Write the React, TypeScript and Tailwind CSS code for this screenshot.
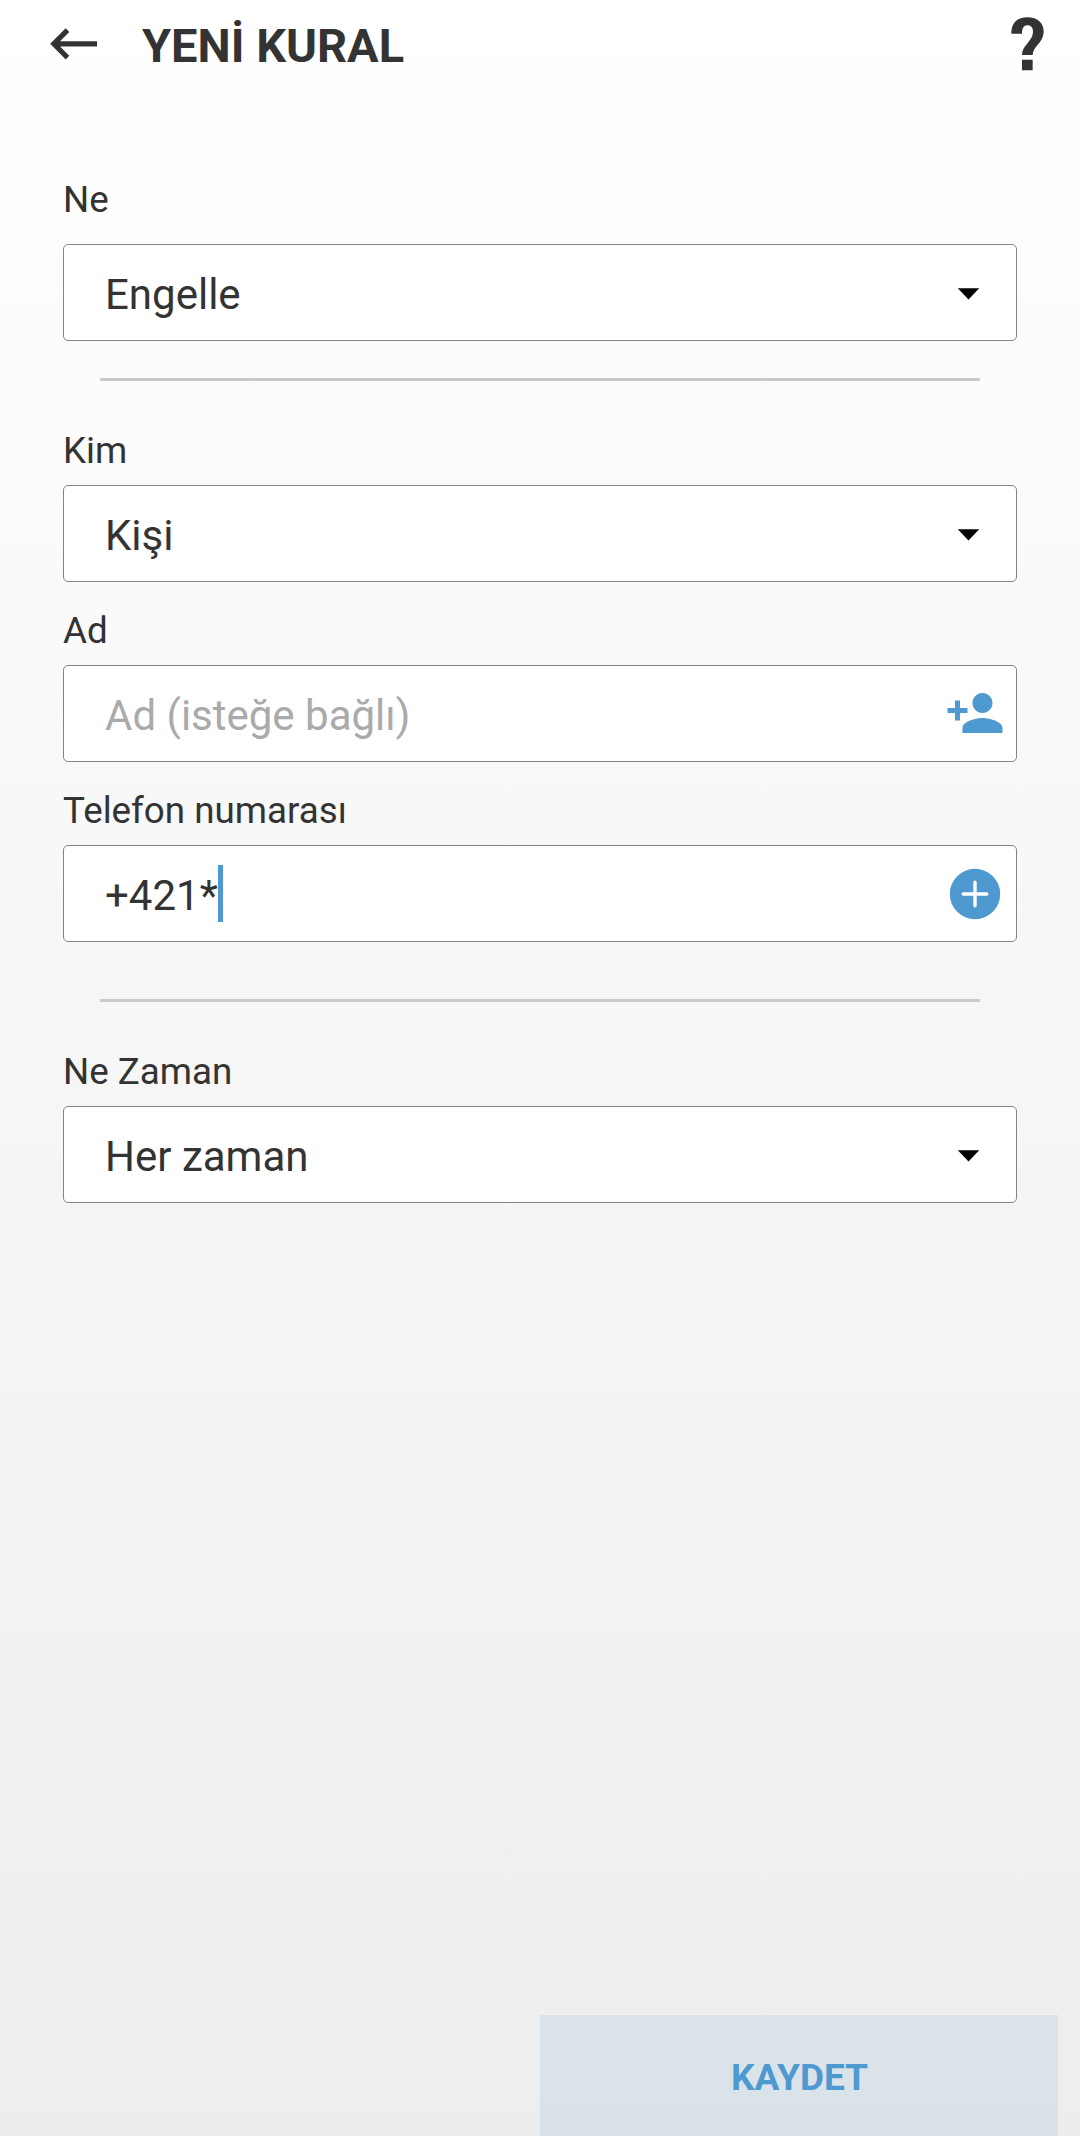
import type { ReactNode } from "react";
import { MdPersonAdd } from "react-icons/md";

function Label({ children }: { children: ReactNode }) {
  return <div className="h-11 text-[36.75px] leading-[46px]">{children}</div>;
}

function Field({ children, icon }: { children: ReactNode; icon: ReactNode }) {
  return (
    <div className="flex h-[97px] items-center justify-between rounded-[5px] border border-[#848484] bg-white pl-[41px] text-[42px] leading-[48px]">
      <div className="flex items-center pt-1">{children}</div>
      {icon}
    </div>
  );
}

function Caret() {
  return (
    <svg className="mt-[2px] mr-[36px] h-3 w-[23px]" viewBox="0 0 23 12">
      <path d="M0.8 0.2H22.2L11.5 11.6Z" fill="#000" />
    </svg>
  );
}

function Divider() {
  return <div className="mx-[37px] h-[3px] bg-[#cacaca]" />;
}

export default function App() {
  return (
    <div className="flex h-[2136px] w-[1080px] flex-col overflow-hidden bg-[linear-gradient(to_bottom,#ffffff_-17px,#ebebeb_2403px)] font-['Roboto',sans-serif] text-[#333333]">
      <header className="flex h-[92px] items-center pr-9 pl-[49px]">
        <svg className="mb-[5px] h-9 w-[50px]" viewBox="49 25.5 50 36" fill="#333333">
          <path d="M50.2 43.3L65.7 27.8L69.3 31.5L60 40.8H97V46H60L69.3 55.3L65.7 59Z" />
        </svg>
        <h1 className="ml-[43px] text-[47px] leading-[56px] font-bold">YENİ KURAL</h1>
        <svg className="mb-[5px] ml-auto h-[54px] w-[33px]" viewBox="154 50 99 162" fill="#333333">
          <path d="M155 100C155 68 172 51 203 51C234 51 252 68 252 94C252 127 219 138 219 164H187C187 134 220 122 220 94C220 82 214 75 203 75C192 75 187 84 187 100ZM187 178h32v32h-32z" />
        </svg>
      </header>

      <main className="flex flex-col px-[63px] pt-[85px]">
        <section className="flex flex-col gap-[23px]">
          <Label>Ne</Label>
          <Field icon={<Caret />}>Engelle</Field>
        </section>

        <div className="pt-[37px] pb-[47px]">
          <Divider />
        </div>

        <section className="flex flex-col gap-[26px]">
          <div className="flex flex-col gap-[13px]">
            <Label>Kim</Label>
            <Field icon={<Caret />}>Kişi</Field>
          </div>
          <div className="flex flex-col gap-[13px]">
            <Label>Ad</Label>
            <Field icon={<MdPersonAdd className="mr-[11px] mb-px size-[60px] text-[#4e99d0]" />}>
              <span className="text-[#aaaaaa]">Ad (isteğe bağlı)</span>
            </Field>
          </div>
          <div className="flex flex-col gap-[13px]">
            <Label>Telefon numarası</Label>
            <Field
              icon={
                <svg className="mr-[15px] size-[52px]" viewBox="0 0 52 52">
                  <circle cx="26" cy="26" r="25.2" fill="#4e99d0" />
                  <path d="M26 14.2V37.8M14.2 26H37.8" stroke="#fff" strokeWidth="3.4" strokeLinecap="round" />
                </svg>
              }
            >
              +421*
              <span className="-mt-1 h-[57px] w-[5px] bg-[#4e99d0]" />
            </Field>
          </div>
        </section>

        <div className="pt-[57px] pb-[47px]">
          <Divider />
        </div>

        <section className="flex flex-col gap-[13px]">
          <Label>Ne Zaman</Label>
          <Field icon={<Caret />}>Her zaman</Field>
        </section>
      </main>

      <footer className="mt-auto flex justify-end pr-[22px]">
        <button className="flex h-[121px] w-[518px] items-center justify-center bg-[linear-gradient(to_bottom,#dbe3ea_86px,#d8e2e8_86px)] pt-1 pl-px text-[37px] leading-[44px] font-bold text-[#4e99d0]">
          KAYDET
        </button>
      </footer>
    </div>
  );
}
